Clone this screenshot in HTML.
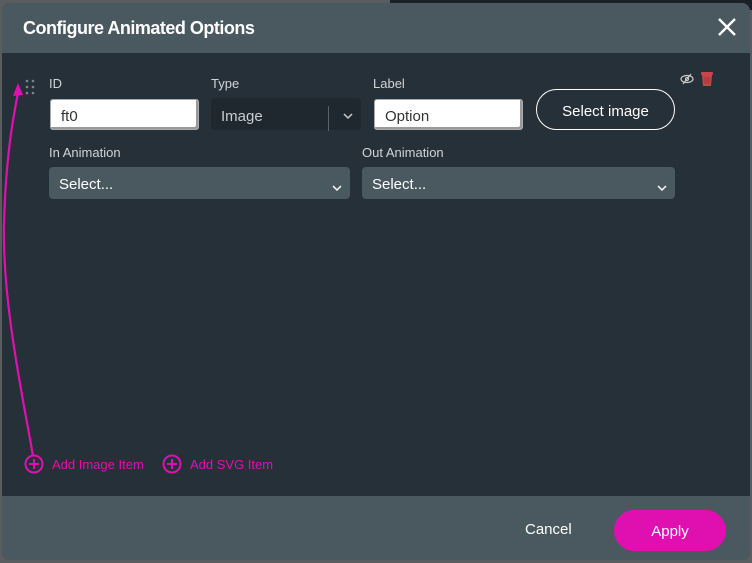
<!DOCTYPE html>
<html><head><style>
*{box-sizing:border-box;margin:0;padding:0}
body{width:752px;height:563px;overflow:hidden;background:#5a5d60;font-family:"Liberation Sans",sans-serif;position:relative}
.bgr{position:absolute;left:390px;top:0;width:362px;height:10px;background:#1c2127}
.dlg{position:absolute;left:2px;top:3px;width:748px;height:557px;border-radius:8px;overflow:hidden;background:#263038}
.hd{height:50px;background:#4a5960;color:#fff;font-size:18px;font-weight:bold;padding:15px 0 0 21px;letter-spacing:-0.5px}
.x{position:absolute;right:13px;top:14px}
.lbl{position:absolute;color:#d0d5d8;font-size:13px}
.inp{position:absolute;background:#fff;border:1px solid #aaa;border-radius:3px;height:31px;font-size:15px;color:#333;padding:7px 0 0 10px;box-shadow:inset -2px -2px 0 #999}
.sel{position:absolute;background:#4a5960;border-radius:4px;height:32px;color:#fff;font-size:15px;padding:9px 0 0 10px}
.chev{position:absolute;right:8px;top:12px}
.btn{position:absolute;left:534px;top:86px;width:139px;height:41px;border:1.5px solid #fff;border-radius:21px;color:#fff;font-size:15px;text-align:center;line-height:43px}
.ft{position:absolute;left:0;top:493px;width:748px;height:64px;background:#4a5960}
.add{position:absolute;top:454px;color:#e010b0;font-size:13px}
</style></head><body>
<div class="bgr"></div>
<div class="dlg">
<div class="hd">Configure Animated Options</div>
<svg class="x" width="20" height="20" viewBox="0 0 20 20"><path d="M2 2L18 18M18 2L2 18" stroke="#fff" stroke-width="2.4"/></svg>
<svg style="position:absolute;left:22px;top:76px" width="12" height="18"><g fill="#7a858c"><circle cx="3" cy="2" r="1.3"/><circle cx="9" cy="2" r="1.3"/><circle cx="3" cy="8" r="1.3"/><circle cx="9" cy="8" r="1.3"/><circle cx="3" cy="14" r="1.3"/><circle cx="9" cy="14" r="1.3"/></g></svg>
<div class="lbl" style="left:47px;top:73px">ID</div>
<div class="lbl" style="left:209px;top:73px">Type</div>
<div class="lbl" style="left:371px;top:73px">Label</div>
<div class="inp" style="left:48px;top:96px;width:149px;padding-top:8px">ft0</div>
<div class="sel" style="left:209px;top:95px;width:150px;height:32px;background:#1f282e;color:#c8ced2;padding-top:10px">Image<div style="position:absolute;left:117px;top:8px;width:1px;height:25px;background:#5a6468"></div><svg class="chev" style="top:15px" width="10" height="7"><path d="M1 1L5 5L9 1" stroke="#ccc" stroke-width="1.5" fill="none"/></svg></div>
<div class="inp" style="left:372px;top:96px;width:149px;padding-top:8px">Option</div>
<div class="btn">Select image</div>
<svg style="position:absolute;left:678px;top:70px" width="14" height="12"><ellipse cx="7" cy="6" rx="6" ry="3.5" stroke="#ccc" stroke-width="1.2" fill="none"/><circle cx="7" cy="6" r="1.6" fill="none" stroke="#ccc"/><path d="M11 1L3 11" stroke="#ccc" stroke-width="1.2"/></svg>
<svg style="position:absolute;left:699px;top:68px" width="12" height="16"><rect x="0" y="1" width="12" height="3" rx="1" fill="#c8454a"/><path d="M1 4H11L10 15H2Z" fill="#c8454a"/><path d="M4 6V13M6 6V13M8 6V13" stroke="#9a2f33" stroke-width="0.8"/></svg>
<div class="lbl" style="left:47px;top:142px">In Animation</div>
<div class="lbl" style="left:360px;top:142px">Out Animation</div>
<div class="sel" style="left:47px;top:164px;width:301px">Select...<svg class="chev" style="top:18px" width="10" height="7"><path d="M1 1L5 5L9 1" stroke="#fff" stroke-width="1.5" fill="none"/></svg></div>
<div class="sel" style="left:360px;top:164px;width:313px">Select...<svg class="chev" style="top:18px" width="10" height="7"><path d="M1 1L5 5L9 1" stroke="#fff" stroke-width="1.5" fill="none"/></svg></div>
<svg style="position:absolute;left:0;top:0" width="748" height="493"><path d="M31 453C22 400 0 300 2 220C4 150 12 110 16 90" stroke="#e010b0" stroke-width="2.2" fill="none"/><path d="M16 80L11 93L21 92Z" fill="#e010b0"/></svg>
<svg style="position:absolute;left:22px;top:451px" width="20" height="20"><circle cx="10" cy="10" r="8.5" stroke="#e010b0" stroke-width="2" fill="none"/><path d="M10 5V15M5 10H15" stroke="#e010b0" stroke-width="2"/></svg>
<div class="add" style="left:50px">Add Image Item</div>
<svg style="position:absolute;left:160px;top:451px" width="20" height="20"><circle cx="10" cy="10" r="8.5" stroke="#e010b0" stroke-width="2" fill="none"/><path d="M10 5V15M5 10H15" stroke="#e010b0" stroke-width="2"/></svg>
<div class="add" style="left:188px">Add SVG Item</div>
<div class="ft">
<div style="position:absolute;left:523px;top:25px;color:#fff;font-size:15px">Cancel</div>
<div style="position:absolute;left:612px;top:14px;width:112px;height:41px;border-radius:21px;background:#e010b0;color:#fff;font-size:15px;text-align:center;line-height:43px">Apply</div>
</div>
</div>
</body></html>
